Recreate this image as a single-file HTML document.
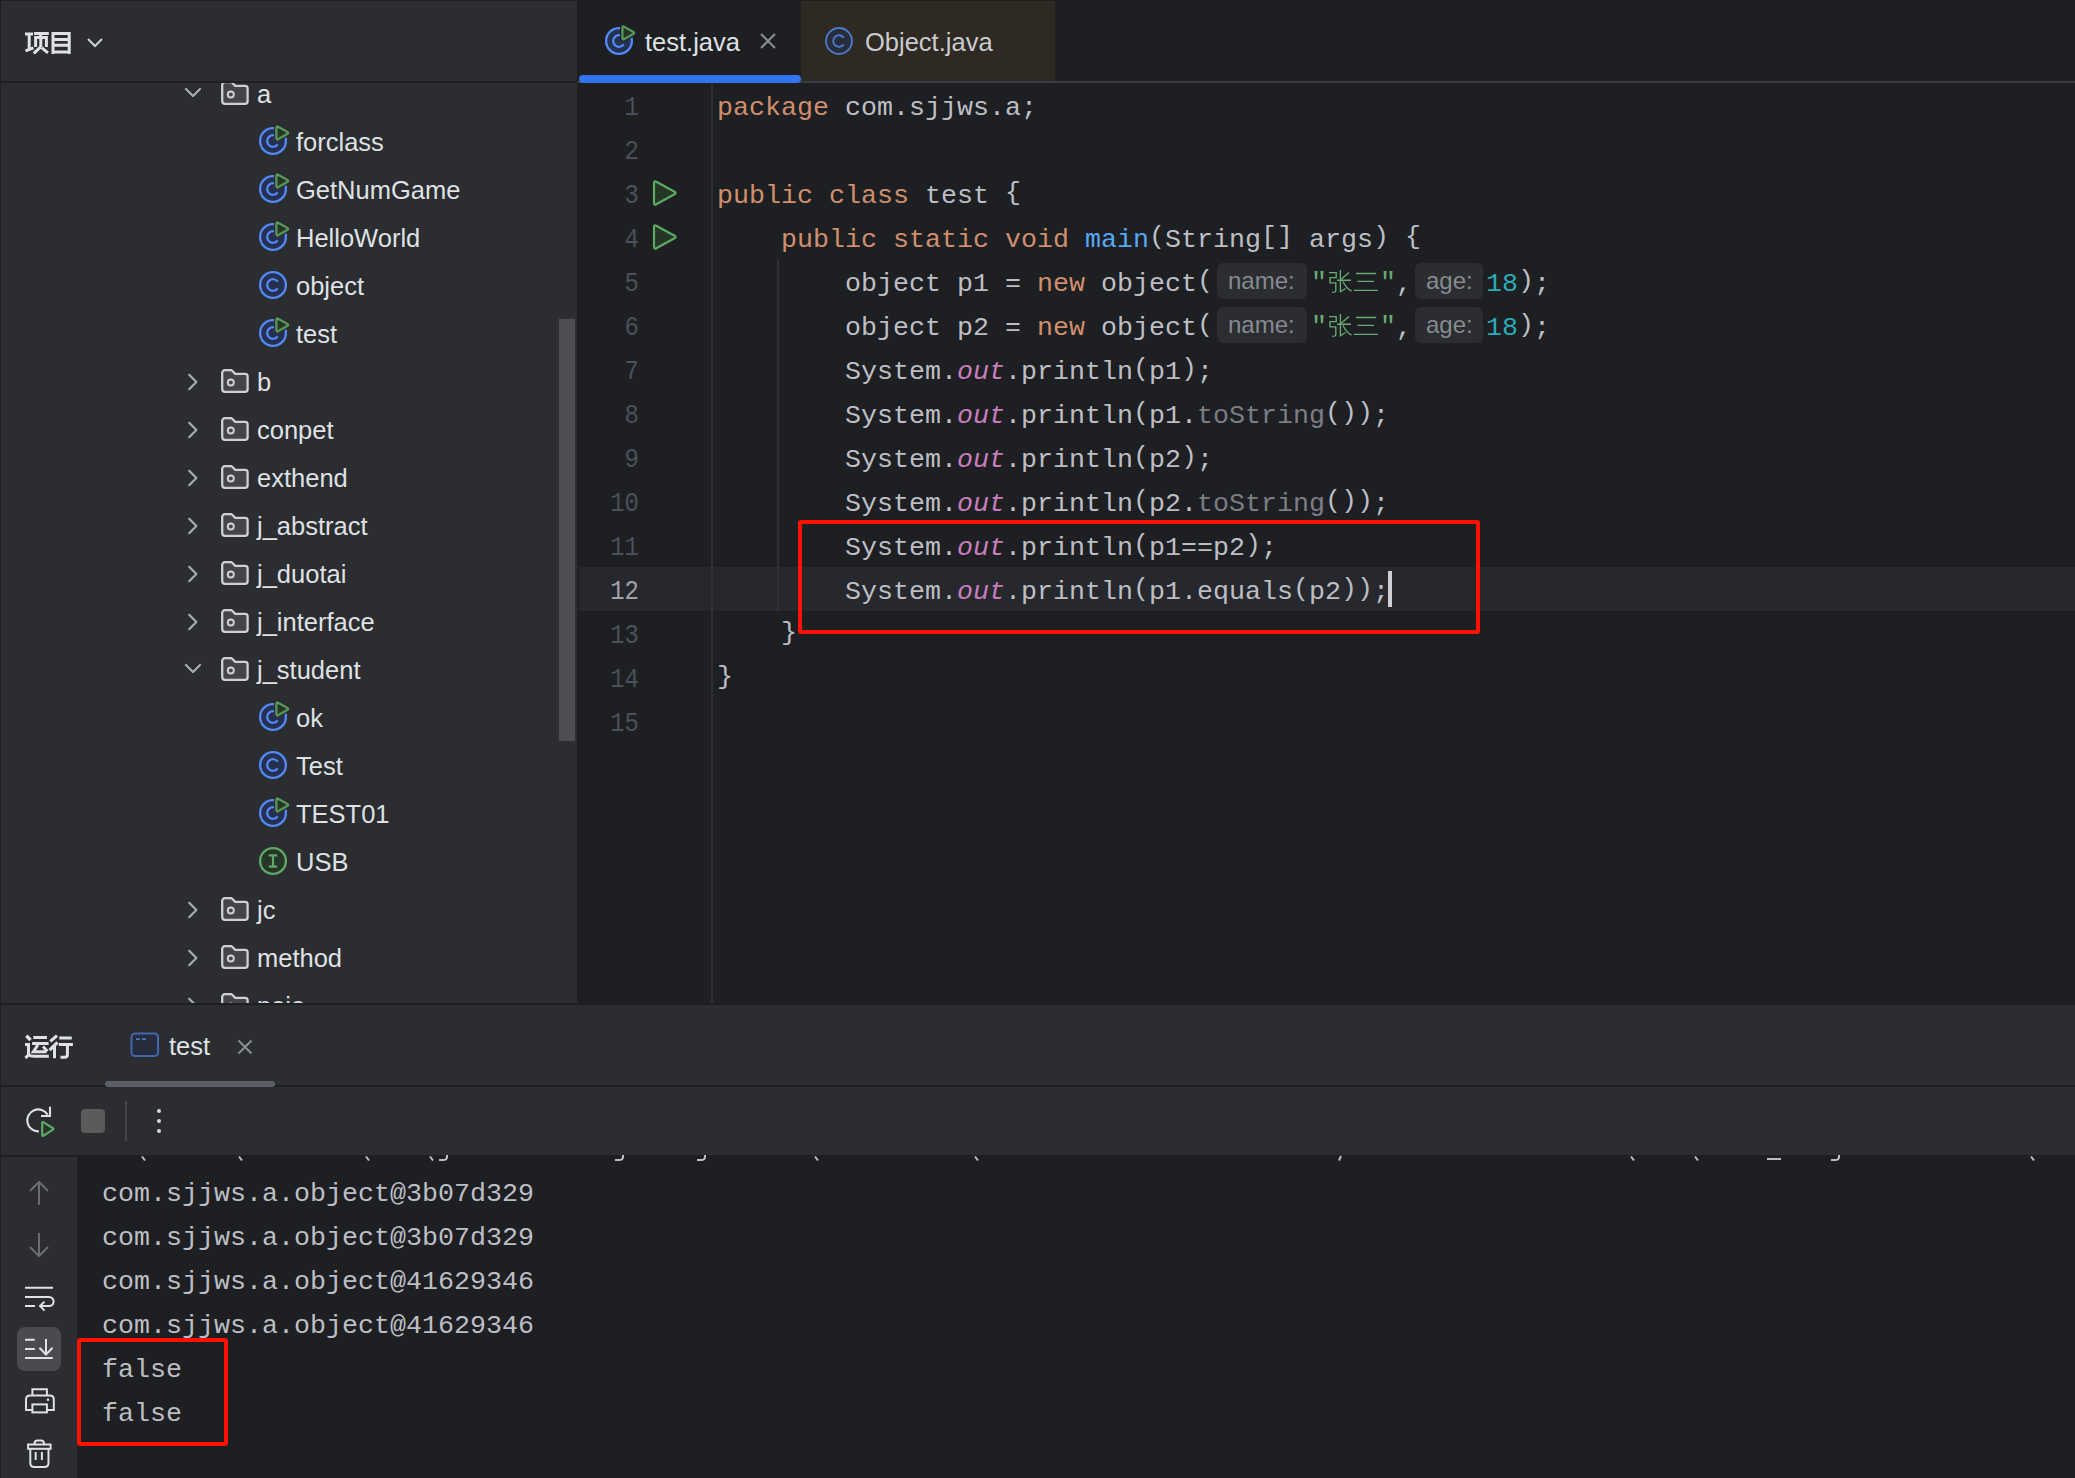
<!DOCTYPE html><html><head><meta charset="utf-8"><title>IDE</title><style>
html,body{margin:0;padding:0;width:2075px;height:1478px;overflow:hidden;background:#1E1F22;}
.t{position:absolute;white-space:pre;}
.sans{font-family:"Liberation Sans", sans-serif;}
.mono{font-family:"Liberation Mono", monospace;}
.b{position:relative;top:-2.5px;}
.q{position:relative;top:-1.3px;}
.r{position:absolute;}
.s{position:absolute;overflow:visible;}
</style></head><body>
<div class="r" style="left:1px;top:1px;width:576px;height:1002px;background:#2B2D30;"></div>
<div class="r" style="left:1px;top:81px;width:576px;height:2px;background:#1E1F22;"></div>
<svg class="s" style="left:20px;top:26px;" width="60" height="34" viewBox="0 0 60 34"><g fill="none" stroke="#DFE1E5" stroke-width="3" stroke-linecap="butt"><path d="M5 8H13M9.2 8V22.5M5.5 24.8L13.5 21.8"/><path d="M14 7.6H28.8M20.6 8V11"/><path d="M14.1 11.6H27.9M15.6 10.1V21M26.4 10.1V21M20.8 13V21"/><path d="M20.6 21L13.8 27.4M21.6 21.6L28 26.8" stroke-linecap="butt"/><path d="M33 6.1V28M49.2 6.1V28M31.5 7.6H50.7M33 13.6H49M33 19.2H49M31.5 25.9H50.7"/></g></svg>
<svg class="s" style="left:84px;top:34px;" width="22" height="16" viewBox="0 0 22 16"><path d="M4 5L11 12L18 5" fill="none" stroke="#CED0D6" stroke-width="2"/></svg>
<div style="position:absolute;left:1px;top:83px;width:556px;height:920px;overflow:hidden;">
<svg class="s" style="left:182px;top:1px" width="20" height="20" viewBox="0 0 20 20"><path d="M3 5L10 12L17 5" fill="none" stroke="#A8ADB4" stroke-width="2.2" stroke-linecap="round" stroke-linejoin="round"/></svg>
<svg class="s" style="left:220px;top:-2px" width="28" height="25" viewBox="0 0 28 25"><path d="M1.2 4a2.8 2.8 0 0 1 2.8-2.8h6.6l3.7 3.7h9.7a2.6 2.6 0 0 1 2.6 2.6v12.8a2.6 2.6 0 0 1-2.6 2.6H4a2.8 2.8 0 0 1-2.8-2.8z" fill="#43454A" stroke="#CED0D6" stroke-width="2.3" stroke-linejoin="round"/><circle cx="9.8" cy="13.6" r="3" fill="none" stroke="#CED0D6" stroke-width="2"/></svg>
<div class="t sans" style="left:256px;top:-12.84px;font-size:25.5px;line-height:48px;color:#DFE1E5;">a</div>
<svg class="s" style="left:256px;top:42px" width="32" height="32" viewBox="0 0 32 32"><circle cx="16" cy="16" r="12.9" fill="#243150" stroke="#548AF7" stroke-width="2.3"/><path d="M20.75 12.67A5.8 5.8 0 1 0 20.75 19.33" fill="none" stroke="#548AF7" stroke-width="2.2"/><path d="M19.40 3.10Q19.40 0.70 21.49 1.88L30.11 6.72Q32.20 7.90 30.11 9.08L21.49 13.92Q19.40 15.10 19.40 12.70Z" fill="#253627" stroke="#2B2D30" stroke-width="4.8" stroke-linejoin="round"/><path d="M19.40 3.10Q19.40 0.70 21.49 1.88L30.11 6.72Q32.20 7.90 30.11 9.08L21.49 13.92Q19.40 15.10 19.40 12.70Z" fill="#253627" stroke="#57965C" stroke-width="2.3" stroke-linejoin="round"/></svg>
<div class="t sans" style="left:295px;top:35.16px;font-size:25.5px;line-height:48px;color:#DFE1E5;">forclass</div>
<svg class="s" style="left:256px;top:90px" width="32" height="32" viewBox="0 0 32 32"><circle cx="16" cy="16" r="12.9" fill="#243150" stroke="#548AF7" stroke-width="2.3"/><path d="M20.75 12.67A5.8 5.8 0 1 0 20.75 19.33" fill="none" stroke="#548AF7" stroke-width="2.2"/><path d="M19.40 3.10Q19.40 0.70 21.49 1.88L30.11 6.72Q32.20 7.90 30.11 9.08L21.49 13.92Q19.40 15.10 19.40 12.70Z" fill="#253627" stroke="#2B2D30" stroke-width="4.8" stroke-linejoin="round"/><path d="M19.40 3.10Q19.40 0.70 21.49 1.88L30.11 6.72Q32.20 7.90 30.11 9.08L21.49 13.92Q19.40 15.10 19.40 12.70Z" fill="#253627" stroke="#57965C" stroke-width="2.3" stroke-linejoin="round"/></svg>
<div class="t sans" style="left:295px;top:83.16px;font-size:25.5px;line-height:48px;color:#DFE1E5;">GetNumGame</div>
<svg class="s" style="left:256px;top:138px" width="32" height="32" viewBox="0 0 32 32"><circle cx="16" cy="16" r="12.9" fill="#243150" stroke="#548AF7" stroke-width="2.3"/><path d="M20.75 12.67A5.8 5.8 0 1 0 20.75 19.33" fill="none" stroke="#548AF7" stroke-width="2.2"/><path d="M19.40 3.10Q19.40 0.70 21.49 1.88L30.11 6.72Q32.20 7.90 30.11 9.08L21.49 13.92Q19.40 15.10 19.40 12.70Z" fill="#253627" stroke="#2B2D30" stroke-width="4.8" stroke-linejoin="round"/><path d="M19.40 3.10Q19.40 0.70 21.49 1.88L30.11 6.72Q32.20 7.90 30.11 9.08L21.49 13.92Q19.40 15.10 19.40 12.70Z" fill="#253627" stroke="#57965C" stroke-width="2.3" stroke-linejoin="round"/></svg>
<div class="t sans" style="left:295px;top:131.16px;font-size:25.5px;line-height:48px;color:#DFE1E5;">HelloWorld</div>
<svg class="s" style="left:256px;top:186px" width="32" height="32" viewBox="0 0 32 32"><circle cx="16" cy="16" r="12.9" fill="#243150" stroke="#548AF7" stroke-width="2.3"/><path d="M20.75 12.67A5.8 5.8 0 1 0 20.75 19.33" fill="none" stroke="#548AF7" stroke-width="2.2"/></svg>
<div class="t sans" style="left:295px;top:179.16px;font-size:25.5px;line-height:48px;color:#DFE1E5;">object</div>
<svg class="s" style="left:256px;top:234px" width="32" height="32" viewBox="0 0 32 32"><circle cx="16" cy="16" r="12.9" fill="#243150" stroke="#548AF7" stroke-width="2.3"/><path d="M20.75 12.67A5.8 5.8 0 1 0 20.75 19.33" fill="none" stroke="#548AF7" stroke-width="2.2"/><path d="M19.40 3.10Q19.40 0.70 21.49 1.88L30.11 6.72Q32.20 7.90 30.11 9.08L21.49 13.92Q19.40 15.10 19.40 12.70Z" fill="#253627" stroke="#2B2D30" stroke-width="4.8" stroke-linejoin="round"/><path d="M19.40 3.10Q19.40 0.70 21.49 1.88L30.11 6.72Q32.20 7.90 30.11 9.08L21.49 13.92Q19.40 15.10 19.40 12.70Z" fill="#253627" stroke="#57965C" stroke-width="2.3" stroke-linejoin="round"/></svg>
<div class="t sans" style="left:295px;top:227.16px;font-size:25.5px;line-height:48px;color:#DFE1E5;">test</div>
<svg class="s" style="left:182px;top:289px" width="20" height="20" viewBox="0 0 20 20"><path d="M6.2 2.8L13.4 10L6.2 17.2" fill="none" stroke="#A8ADB4" stroke-width="2.2" stroke-linecap="round" stroke-linejoin="round"/></svg>
<svg class="s" style="left:220px;top:286px" width="28" height="25" viewBox="0 0 28 25"><path d="M1.2 4a2.8 2.8 0 0 1 2.8-2.8h6.6l3.7 3.7h9.7a2.6 2.6 0 0 1 2.6 2.6v12.8a2.6 2.6 0 0 1-2.6 2.6H4a2.8 2.8 0 0 1-2.8-2.8z" fill="#43454A" stroke="#CED0D6" stroke-width="2.3" stroke-linejoin="round"/><circle cx="9.8" cy="13.6" r="3" fill="none" stroke="#CED0D6" stroke-width="2"/></svg>
<div class="t sans" style="left:256px;top:275.16px;font-size:25.5px;line-height:48px;color:#DFE1E5;">b</div>
<svg class="s" style="left:182px;top:337px" width="20" height="20" viewBox="0 0 20 20"><path d="M6.2 2.8L13.4 10L6.2 17.2" fill="none" stroke="#A8ADB4" stroke-width="2.2" stroke-linecap="round" stroke-linejoin="round"/></svg>
<svg class="s" style="left:220px;top:334px" width="28" height="25" viewBox="0 0 28 25"><path d="M1.2 4a2.8 2.8 0 0 1 2.8-2.8h6.6l3.7 3.7h9.7a2.6 2.6 0 0 1 2.6 2.6v12.8a2.6 2.6 0 0 1-2.6 2.6H4a2.8 2.8 0 0 1-2.8-2.8z" fill="#43454A" stroke="#CED0D6" stroke-width="2.3" stroke-linejoin="round"/><circle cx="9.8" cy="13.6" r="3" fill="none" stroke="#CED0D6" stroke-width="2"/></svg>
<div class="t sans" style="left:256px;top:323.16px;font-size:25.5px;line-height:48px;color:#DFE1E5;">conpet</div>
<svg class="s" style="left:182px;top:385px" width="20" height="20" viewBox="0 0 20 20"><path d="M6.2 2.8L13.4 10L6.2 17.2" fill="none" stroke="#A8ADB4" stroke-width="2.2" stroke-linecap="round" stroke-linejoin="round"/></svg>
<svg class="s" style="left:220px;top:382px" width="28" height="25" viewBox="0 0 28 25"><path d="M1.2 4a2.8 2.8 0 0 1 2.8-2.8h6.6l3.7 3.7h9.7a2.6 2.6 0 0 1 2.6 2.6v12.8a2.6 2.6 0 0 1-2.6 2.6H4a2.8 2.8 0 0 1-2.8-2.8z" fill="#43454A" stroke="#CED0D6" stroke-width="2.3" stroke-linejoin="round"/><circle cx="9.8" cy="13.6" r="3" fill="none" stroke="#CED0D6" stroke-width="2"/></svg>
<div class="t sans" style="left:256px;top:371.16px;font-size:25.5px;line-height:48px;color:#DFE1E5;">exthend</div>
<svg class="s" style="left:182px;top:433px" width="20" height="20" viewBox="0 0 20 20"><path d="M6.2 2.8L13.4 10L6.2 17.2" fill="none" stroke="#A8ADB4" stroke-width="2.2" stroke-linecap="round" stroke-linejoin="round"/></svg>
<svg class="s" style="left:220px;top:430px" width="28" height="25" viewBox="0 0 28 25"><path d="M1.2 4a2.8 2.8 0 0 1 2.8-2.8h6.6l3.7 3.7h9.7a2.6 2.6 0 0 1 2.6 2.6v12.8a2.6 2.6 0 0 1-2.6 2.6H4a2.8 2.8 0 0 1-2.8-2.8z" fill="#43454A" stroke="#CED0D6" stroke-width="2.3" stroke-linejoin="round"/><circle cx="9.8" cy="13.6" r="3" fill="none" stroke="#CED0D6" stroke-width="2"/></svg>
<div class="t sans" style="left:256px;top:419.16px;font-size:25.5px;line-height:48px;color:#DFE1E5;">j_abstract</div>
<svg class="s" style="left:182px;top:481px" width="20" height="20" viewBox="0 0 20 20"><path d="M6.2 2.8L13.4 10L6.2 17.2" fill="none" stroke="#A8ADB4" stroke-width="2.2" stroke-linecap="round" stroke-linejoin="round"/></svg>
<svg class="s" style="left:220px;top:478px" width="28" height="25" viewBox="0 0 28 25"><path d="M1.2 4a2.8 2.8 0 0 1 2.8-2.8h6.6l3.7 3.7h9.7a2.6 2.6 0 0 1 2.6 2.6v12.8a2.6 2.6 0 0 1-2.6 2.6H4a2.8 2.8 0 0 1-2.8-2.8z" fill="#43454A" stroke="#CED0D6" stroke-width="2.3" stroke-linejoin="round"/><circle cx="9.8" cy="13.6" r="3" fill="none" stroke="#CED0D6" stroke-width="2"/></svg>
<div class="t sans" style="left:256px;top:467.16px;font-size:25.5px;line-height:48px;color:#DFE1E5;">j_duotai</div>
<svg class="s" style="left:182px;top:529px" width="20" height="20" viewBox="0 0 20 20"><path d="M6.2 2.8L13.4 10L6.2 17.2" fill="none" stroke="#A8ADB4" stroke-width="2.2" stroke-linecap="round" stroke-linejoin="round"/></svg>
<svg class="s" style="left:220px;top:526px" width="28" height="25" viewBox="0 0 28 25"><path d="M1.2 4a2.8 2.8 0 0 1 2.8-2.8h6.6l3.7 3.7h9.7a2.6 2.6 0 0 1 2.6 2.6v12.8a2.6 2.6 0 0 1-2.6 2.6H4a2.8 2.8 0 0 1-2.8-2.8z" fill="#43454A" stroke="#CED0D6" stroke-width="2.3" stroke-linejoin="round"/><circle cx="9.8" cy="13.6" r="3" fill="none" stroke="#CED0D6" stroke-width="2"/></svg>
<div class="t sans" style="left:256px;top:515.16px;font-size:25.5px;line-height:48px;color:#DFE1E5;">j_interface</div>
<svg class="s" style="left:182px;top:577px" width="20" height="20" viewBox="0 0 20 20"><path d="M3 5L10 12L17 5" fill="none" stroke="#A8ADB4" stroke-width="2.2" stroke-linecap="round" stroke-linejoin="round"/></svg>
<svg class="s" style="left:220px;top:574px" width="28" height="25" viewBox="0 0 28 25"><path d="M1.2 4a2.8 2.8 0 0 1 2.8-2.8h6.6l3.7 3.7h9.7a2.6 2.6 0 0 1 2.6 2.6v12.8a2.6 2.6 0 0 1-2.6 2.6H4a2.8 2.8 0 0 1-2.8-2.8z" fill="#43454A" stroke="#CED0D6" stroke-width="2.3" stroke-linejoin="round"/><circle cx="9.8" cy="13.6" r="3" fill="none" stroke="#CED0D6" stroke-width="2"/></svg>
<div class="t sans" style="left:256px;top:563.16px;font-size:25.5px;line-height:48px;color:#DFE1E5;">j_student</div>
<svg class="s" style="left:256px;top:618px" width="32" height="32" viewBox="0 0 32 32"><circle cx="16" cy="16" r="12.9" fill="#243150" stroke="#548AF7" stroke-width="2.3"/><path d="M20.75 12.67A5.8 5.8 0 1 0 20.75 19.33" fill="none" stroke="#548AF7" stroke-width="2.2"/><path d="M19.40 3.10Q19.40 0.70 21.49 1.88L30.11 6.72Q32.20 7.90 30.11 9.08L21.49 13.92Q19.40 15.10 19.40 12.70Z" fill="#253627" stroke="#2B2D30" stroke-width="4.8" stroke-linejoin="round"/><path d="M19.40 3.10Q19.40 0.70 21.49 1.88L30.11 6.72Q32.20 7.90 30.11 9.08L21.49 13.92Q19.40 15.10 19.40 12.70Z" fill="#253627" stroke="#57965C" stroke-width="2.3" stroke-linejoin="round"/></svg>
<div class="t sans" style="left:295px;top:611.16px;font-size:25.5px;line-height:48px;color:#DFE1E5;">ok</div>
<svg class="s" style="left:256px;top:666px" width="32" height="32" viewBox="0 0 32 32"><circle cx="16" cy="16" r="12.9" fill="#243150" stroke="#548AF7" stroke-width="2.3"/><path d="M20.75 12.67A5.8 5.8 0 1 0 20.75 19.33" fill="none" stroke="#548AF7" stroke-width="2.2"/></svg>
<div class="t sans" style="left:295px;top:659.16px;font-size:25.5px;line-height:48px;color:#DFE1E5;">Test</div>
<svg class="s" style="left:256px;top:714px" width="32" height="32" viewBox="0 0 32 32"><circle cx="16" cy="16" r="12.9" fill="#243150" stroke="#548AF7" stroke-width="2.3"/><path d="M20.75 12.67A5.8 5.8 0 1 0 20.75 19.33" fill="none" stroke="#548AF7" stroke-width="2.2"/><path d="M19.40 3.10Q19.40 0.70 21.49 1.88L30.11 6.72Q32.20 7.90 30.11 9.08L21.49 13.92Q19.40 15.10 19.40 12.70Z" fill="#253627" stroke="#2B2D30" stroke-width="4.8" stroke-linejoin="round"/><path d="M19.40 3.10Q19.40 0.70 21.49 1.88L30.11 6.72Q32.20 7.90 30.11 9.08L21.49 13.92Q19.40 15.10 19.40 12.70Z" fill="#253627" stroke="#57965C" stroke-width="2.3" stroke-linejoin="round"/></svg>
<div class="t sans" style="left:295px;top:707.16px;font-size:25.5px;line-height:48px;color:#DFE1E5;">TEST01</div>
<svg class="s" style="left:256px;top:762px" width="32" height="32" viewBox="0 0 32 32"><circle cx="16" cy="16" r="12.9" fill="#253627" stroke="#5FA866" stroke-width="2.3"/><path d="M11.8 10.3H20.2M16 10.3V21.7M11.8 21.7H20.2" fill="none" stroke="#5FA866" stroke-width="2.2"/></svg>
<div class="t sans" style="left:295px;top:755.16px;font-size:25.5px;line-height:48px;color:#DFE1E5;">USB</div>
<svg class="s" style="left:182px;top:817px" width="20" height="20" viewBox="0 0 20 20"><path d="M6.2 2.8L13.4 10L6.2 17.2" fill="none" stroke="#A8ADB4" stroke-width="2.2" stroke-linecap="round" stroke-linejoin="round"/></svg>
<svg class="s" style="left:220px;top:814px" width="28" height="25" viewBox="0 0 28 25"><path d="M1.2 4a2.8 2.8 0 0 1 2.8-2.8h6.6l3.7 3.7h9.7a2.6 2.6 0 0 1 2.6 2.6v12.8a2.6 2.6 0 0 1-2.6 2.6H4a2.8 2.8 0 0 1-2.8-2.8z" fill="#43454A" stroke="#CED0D6" stroke-width="2.3" stroke-linejoin="round"/><circle cx="9.8" cy="13.6" r="3" fill="none" stroke="#CED0D6" stroke-width="2"/></svg>
<div class="t sans" style="left:256px;top:803.16px;font-size:25.5px;line-height:48px;color:#DFE1E5;">jc</div>
<svg class="s" style="left:182px;top:865px" width="20" height="20" viewBox="0 0 20 20"><path d="M6.2 2.8L13.4 10L6.2 17.2" fill="none" stroke="#A8ADB4" stroke-width="2.2" stroke-linecap="round" stroke-linejoin="round"/></svg>
<svg class="s" style="left:220px;top:862px" width="28" height="25" viewBox="0 0 28 25"><path d="M1.2 4a2.8 2.8 0 0 1 2.8-2.8h6.6l3.7 3.7h9.7a2.6 2.6 0 0 1 2.6 2.6v12.8a2.6 2.6 0 0 1-2.6 2.6H4a2.8 2.8 0 0 1-2.8-2.8z" fill="#43454A" stroke="#CED0D6" stroke-width="2.3" stroke-linejoin="round"/><circle cx="9.8" cy="13.6" r="3" fill="none" stroke="#CED0D6" stroke-width="2"/></svg>
<div class="t sans" style="left:256px;top:851.16px;font-size:25.5px;line-height:48px;color:#DFE1E5;">method</div>
<svg class="s" style="left:182px;top:913px" width="20" height="20" viewBox="0 0 20 20"><path d="M6.2 2.8L13.4 10L6.2 17.2" fill="none" stroke="#A8ADB4" stroke-width="2.2" stroke-linecap="round" stroke-linejoin="round"/></svg>
<svg class="s" style="left:220px;top:910px" width="28" height="25" viewBox="0 0 28 25"><path d="M1.2 4a2.8 2.8 0 0 1 2.8-2.8h6.6l3.7 3.7h9.7a2.6 2.6 0 0 1 2.6 2.6v12.8a2.6 2.6 0 0 1-2.6 2.6H4a2.8 2.8 0 0 1-2.8-2.8z" fill="#43454A" stroke="#CED0D6" stroke-width="2.3" stroke-linejoin="round"/><circle cx="9.8" cy="13.6" r="3" fill="none" stroke="#CED0D6" stroke-width="2"/></svg>
<div class="t sans" style="left:256px;top:899.16px;font-size:25.5px;line-height:48px;color:#DFE1E5;">pojo</div>
</div>
<div class="r" style="left:557px;top:317px;width:20px;height:426px;background:#2D2F32;"></div>
<div class="r" style="left:559px;top:319px;width:16px;height:422px;background:#4D4E52;"></div>
<div class="r" style="left:577px;top:1px;width:1498px;height:80px;background:#1E1F22;"></div>
<div class="r" style="left:801px;top:1px;width:254px;height:80px;background:#2E2922;"></div>
<div class="r" style="left:577px;top:81px;width:1498px;height:2px;background:#393B40;"></div>
<div class="r" style="left:579px;top:75px;width:222px;height:8px;background:#3574F0;border-radius:4px;"></div>
<svg class="s" style="left:603px;top:25px;" width="32" height="32" viewBox="0 0 32 32"><circle cx="16" cy="16" r="12.9" fill="#243150" stroke="#548AF7" stroke-width="2.3"/><path d="M20.75 12.67A5.8 5.8 0 1 0 20.75 19.33" fill="none" stroke="#548AF7" stroke-width="2.2"/><path d="M19.40 3.10Q19.40 0.70 21.49 1.88L30.11 6.72Q32.20 7.90 30.11 9.08L21.49 13.92Q19.40 15.10 19.40 12.70Z" fill="#253627" stroke="#1E1F22" stroke-width="4.8" stroke-linejoin="round"/><path d="M19.40 3.10Q19.40 0.70 21.49 1.88L30.11 6.72Q32.20 7.90 30.11 9.08L21.49 13.92Q19.40 15.10 19.40 12.70Z" fill="#253627" stroke="#57965C" stroke-width="2.3" stroke-linejoin="round"/></svg>
<svg class="s" style="left:823px;top:25px;" width="32" height="32" viewBox="0 0 32 32"><circle cx="16" cy="16" r="13" fill="#262D3D" stroke="#4E78C8" stroke-width="1.9"/><path d="M20.75 12.67A5.8 5.8 0 1 0 20.75 19.33" fill="none" stroke="#4E78C8" stroke-width="1.9"/></svg>
<div class="t sans" style="left:645px;top:23.16px;font-size:25.5px;line-height:38px;color:#DFE1E5;font-weight:normal;font-style:normal;">test.java</div>
<div class="t sans" style="left:865px;top:23.16px;font-size:25.5px;line-height:38px;color:#C9CBCF;font-weight:normal;font-style:normal;">Object.java</div>
<svg class="s" style="left:758px;top:31px;" width="20" height="20" viewBox="0 0 20 20"><path d="M3 3L17 17M17 3L3 17" stroke="#8B8E94" stroke-width="2"/></svg>
<div class="r" style="left:579px;top:567px;width:1496px;height:44px;background:#26282E;"></div>
<div class="r" style="left:711px;top:83px;width:2px;height:920px;background:#2E3034;"></div>
<div class="r" style="left:777px;top:259px;width:2px;height:352px;background:#2E3034;"></div>
<div class="t mono" style="left:539px;width:100px;text-align:right;top:86.10px;font-size:28.2px;line-height:44px;color:#4B5059;transform:scaleX(0.85);transform-origin:100% 50%;">1</div>
<div class="t mono" style="left:539px;width:100px;text-align:right;top:130.10px;font-size:28.2px;line-height:44px;color:#4B5059;transform:scaleX(0.85);transform-origin:100% 50%;">2</div>
<div class="t mono" style="left:539px;width:100px;text-align:right;top:174.10px;font-size:28.2px;line-height:44px;color:#4B5059;transform:scaleX(0.85);transform-origin:100% 50%;">3</div>
<div class="t mono" style="left:539px;width:100px;text-align:right;top:218.10px;font-size:28.2px;line-height:44px;color:#4B5059;transform:scaleX(0.85);transform-origin:100% 50%;">4</div>
<div class="t mono" style="left:539px;width:100px;text-align:right;top:262.10px;font-size:28.2px;line-height:44px;color:#4B5059;transform:scaleX(0.85);transform-origin:100% 50%;">5</div>
<div class="t mono" style="left:539px;width:100px;text-align:right;top:306.10px;font-size:28.2px;line-height:44px;color:#4B5059;transform:scaleX(0.85);transform-origin:100% 50%;">6</div>
<div class="t mono" style="left:539px;width:100px;text-align:right;top:350.10px;font-size:28.2px;line-height:44px;color:#4B5059;transform:scaleX(0.85);transform-origin:100% 50%;">7</div>
<div class="t mono" style="left:539px;width:100px;text-align:right;top:394.10px;font-size:28.2px;line-height:44px;color:#4B5059;transform:scaleX(0.85);transform-origin:100% 50%;">8</div>
<div class="t mono" style="left:539px;width:100px;text-align:right;top:438.10px;font-size:28.2px;line-height:44px;color:#4B5059;transform:scaleX(0.85);transform-origin:100% 50%;">9</div>
<div class="t mono" style="left:539px;width:100px;text-align:right;top:482.10px;font-size:28.2px;line-height:44px;color:#4B5059;transform:scaleX(0.85);transform-origin:100% 50%;">10</div>
<div class="t mono" style="left:539px;width:100px;text-align:right;top:526.10px;font-size:28.2px;line-height:44px;color:#4B5059;transform:scaleX(0.85);transform-origin:100% 50%;">11</div>
<div class="t mono" style="left:539px;width:100px;text-align:right;top:570.10px;font-size:28.2px;line-height:44px;color:#A1A3AB;transform:scaleX(0.85);transform-origin:100% 50%;">12</div>
<div class="t mono" style="left:539px;width:100px;text-align:right;top:614.10px;font-size:28.2px;line-height:44px;color:#4B5059;transform:scaleX(0.85);transform-origin:100% 50%;">13</div>
<div class="t mono" style="left:539px;width:100px;text-align:right;top:658.10px;font-size:28.2px;line-height:44px;color:#4B5059;transform:scaleX(0.85);transform-origin:100% 50%;">14</div>
<div class="t mono" style="left:539px;width:100px;text-align:right;top:702.10px;font-size:28.2px;line-height:44px;color:#4B5059;transform:scaleX(0.85);transform-origin:100% 50%;">15</div>
<div class="t mono" style="left:717px;top:85.90px;font-size:26.67px;line-height:44px;color:#BCBEC4;font-weight:normal;font-style:normal;"><span style="color:#CF8E6D;">package </span><span style="color:#BCBEC4;">com.sjjws.a;</span></div>
<div class="t mono" style="left:717px;top:173.90px;font-size:26.67px;line-height:44px;color:#BCBEC4;font-weight:normal;font-style:normal;"><span style="color:#CF8E6D;">public class </span><span style="color:#BCBEC4;">test <span class="b">{</span></span></div>
<div class="t mono" style="left:781px;top:217.90px;font-size:26.67px;line-height:44px;color:#BCBEC4;font-weight:normal;font-style:normal;"><span style="color:#CF8E6D;">public static void </span><span style="color:#56A8F5;">main</span><span style="color:#BCBEC4;"><span class="b">(</span>String<span class="b">[</span><span class="b">]</span> args<span class="b">)</span> <span class="b">{</span></span></div>
<div class="t mono" style="left:845px;top:349.90px;font-size:26.67px;line-height:44px;color:#BCBEC4;font-weight:normal;font-style:normal;"><span style="color:#BCBEC4;">System.</span><span style="color:#C77DBB;font-style:italic;">out</span><span style="color:#BCBEC4;">.println<span class="b">(</span>p1<span class="b">)</span>;</span></div>
<div class="t mono" style="left:845px;top:437.90px;font-size:26.67px;line-height:44px;color:#BCBEC4;font-weight:normal;font-style:normal;"><span style="color:#BCBEC4;">System.</span><span style="color:#C77DBB;font-style:italic;">out</span><span style="color:#BCBEC4;">.println<span class="b">(</span>p2<span class="b">)</span>;</span></div>
<div class="t mono" style="left:845px;top:393.90px;font-size:26.67px;line-height:44px;color:#BCBEC4;font-weight:normal;font-style:normal;"><span style="color:#BCBEC4;">System.</span><span style="color:#C77DBB;font-style:italic;">out</span><span style="color:#BCBEC4;">.println<span class="b">(</span>p1.</span><span style="color:#7A7E85;">toString</span><span style="color:#BCBEC4;"><span class="b">(</span><span class="b">)</span><span class="b">)</span>;</span></div>
<div class="t mono" style="left:845px;top:481.90px;font-size:26.67px;line-height:44px;color:#BCBEC4;font-weight:normal;font-style:normal;"><span style="color:#BCBEC4;">System.</span><span style="color:#C77DBB;font-style:italic;">out</span><span style="color:#BCBEC4;">.println<span class="b">(</span>p2.</span><span style="color:#7A7E85;">toString</span><span style="color:#BCBEC4;"><span class="b">(</span><span class="b">)</span><span class="b">)</span>;</span></div>
<div class="t mono" style="left:845px;top:525.90px;font-size:26.67px;line-height:44px;color:#BCBEC4;font-weight:normal;font-style:normal;"><span style="color:#BCBEC4;">System.</span><span style="color:#C77DBB;font-style:italic;">out</span><span style="color:#BCBEC4;">.println<span class="b">(</span>p1==p2<span class="b">)</span>;</span></div>
<div class="t mono" style="left:845px;top:569.90px;font-size:26.67px;line-height:44px;color:#BCBEC4;font-weight:normal;font-style:normal;"><span style="color:#BCBEC4;">System.</span><span style="color:#C77DBB;font-style:italic;">out</span><span style="color:#BCBEC4;">.println<span class="b">(</span>p1.equals<span class="b">(</span>p2<span class="b">)</span><span class="b">)</span>;</span></div>
<div class="t mono" style="left:781px;top:613.90px;font-size:26.67px;line-height:44px;color:#BCBEC4;font-weight:normal;font-style:normal;"><span style="color:#BCBEC4;"><span class="b">}</span></span></div>
<div class="t mono" style="left:717px;top:657.90px;font-size:26.67px;line-height:44px;color:#BCBEC4;font-weight:normal;font-style:normal;"><span style="color:#BCBEC4;"><span class="b">}</span></span></div>
<div class="t mono" style="left:845px;top:261.90px;font-size:26.67px;line-height:44px;color:#BCBEC4;font-weight:normal;font-style:normal;"><span style="color:#BCBEC4;">object p1 = </span><span style="color:#CF8E6D;">new </span><span style="color:#BCBEC4;">object<span class="b">(</span></span></div>
<div class="r" style="left:1217px;top:263px;width:90px;height:36px;background:#2B2D30;border-radius:6px;"></div>
<div class="t sans" style="left:1228px;top:262.68px;font-size:24px;line-height:36px;color:#868A91;font-weight:normal;font-style:normal;">name:</div>
<div class="t mono" style="left:1311px;top:261.90px;font-size:26.67px;line-height:44px;color:#6AAB73;font-weight:normal;font-style:normal;"><span class="q">&quot;</span></div>
<svg class="s" style="left:1327px;top:269px;" width="53" height="26" viewBox="0 0 53 26"><g fill="none" stroke="#6AAB73" stroke-width="1.35" stroke-linecap="butt" stroke-linejoin="miter"><path d="M2 3.6H9.2V8.6H3V13.9H8.8V21.5Q8.8 23.6 5.2 23.4"/><path d="M13.4 1V22.8L18.5 19.5M22 3.5L14.5 10M10 11.2H24M16 12.5Q19 19 24.5 22.2"/><path d="M29 4.5H49M30.5 12.4H47M27 21.4H50.8"/></g></svg>
<div class="t mono" style="left:1380px;top:261.90px;font-size:26.67px;line-height:44px;color:#6AAB73;font-weight:normal;font-style:normal;"><span class="q">&quot;</span></div>
<div class="t mono" style="left:1396px;top:261.90px;font-size:26.67px;line-height:44px;color:#BCBEC4;font-weight:normal;font-style:normal;">,</div>
<div class="r" style="left:1415px;top:263px;width:68px;height:36px;background:#2B2D30;border-radius:6px;"></div>
<div class="t sans" style="left:1426px;top:262.68px;font-size:24px;line-height:36px;color:#868A91;font-weight:normal;font-style:normal;">age:</div>
<div class="t mono" style="left:1486px;top:261.90px;font-size:26.67px;line-height:44px;color:#2AACB8;font-weight:normal;font-style:normal;">18</div>
<div class="t mono" style="left:1518px;top:261.90px;font-size:26.67px;line-height:44px;color:#BCBEC4;font-weight:normal;font-style:normal;"><span class="b">)</span>;</div>
<div class="t mono" style="left:845px;top:305.90px;font-size:26.67px;line-height:44px;color:#BCBEC4;font-weight:normal;font-style:normal;"><span style="color:#BCBEC4;">object p2 = </span><span style="color:#CF8E6D;">new </span><span style="color:#BCBEC4;">object<span class="b">(</span></span></div>
<div class="r" style="left:1217px;top:307px;width:90px;height:36px;background:#2B2D30;border-radius:6px;"></div>
<div class="t sans" style="left:1228px;top:306.68px;font-size:24px;line-height:36px;color:#868A91;font-weight:normal;font-style:normal;">name:</div>
<div class="t mono" style="left:1311px;top:305.90px;font-size:26.67px;line-height:44px;color:#6AAB73;font-weight:normal;font-style:normal;"><span class="q">&quot;</span></div>
<svg class="s" style="left:1327px;top:313px;" width="53" height="26" viewBox="0 0 53 26"><g fill="none" stroke="#6AAB73" stroke-width="1.35" stroke-linecap="butt" stroke-linejoin="miter"><path d="M2 3.6H9.2V8.6H3V13.9H8.8V21.5Q8.8 23.6 5.2 23.4"/><path d="M13.4 1V22.8L18.5 19.5M22 3.5L14.5 10M10 11.2H24M16 12.5Q19 19 24.5 22.2"/><path d="M29 4.5H49M30.5 12.4H47M27 21.4H50.8"/></g></svg>
<div class="t mono" style="left:1380px;top:305.90px;font-size:26.67px;line-height:44px;color:#6AAB73;font-weight:normal;font-style:normal;"><span class="q">&quot;</span></div>
<div class="t mono" style="left:1396px;top:305.90px;font-size:26.67px;line-height:44px;color:#BCBEC4;font-weight:normal;font-style:normal;">,</div>
<div class="r" style="left:1415px;top:307px;width:68px;height:36px;background:#2B2D30;border-radius:6px;"></div>
<div class="t sans" style="left:1426px;top:306.68px;font-size:24px;line-height:36px;color:#868A91;font-weight:normal;font-style:normal;">age:</div>
<div class="t mono" style="left:1486px;top:305.90px;font-size:26.67px;line-height:44px;color:#2AACB8;font-weight:normal;font-style:normal;">18</div>
<div class="t mono" style="left:1518px;top:305.90px;font-size:26.67px;line-height:44px;color:#BCBEC4;font-weight:normal;font-style:normal;"><span class="b">)</span>;</div>
<div class="r" style="left:1388px;top:571px;width:4px;height:36px;background:#CED0D6;"></div>
<div style="position:absolute;left:798px;top:520px;width:682px;height:114px;border:4px solid #FF1100;border-radius:3px;box-sizing:border-box;"></div>
<svg class="s" style="left:650px;top:178px;" width="30" height="30" viewBox="0 0 30 30"><path d="M4.00 5.20Q4.00 2.60 6.28 3.84L24.52 13.76Q26.80 15.00 24.52 16.24L6.28 26.16Q4.00 27.40 4.00 24.80Z" fill="#253627" stroke="#5DAA63" stroke-width="2.2" stroke-linejoin="round"/></svg>
<svg class="s" style="left:650px;top:222px;" width="30" height="30" viewBox="0 0 30 30"><path d="M4.00 5.20Q4.00 2.60 6.28 3.84L24.52 13.76Q26.80 15.00 24.52 16.24L6.28 26.16Q4.00 27.40 4.00 24.80Z" fill="#253627" stroke="#5DAA63" stroke-width="2.2" stroke-linejoin="round"/></svg>
<div class="r" style="left:0px;top:1003px;width:2075px;height:2px;background:#1E1F22;"></div>
<div class="r" style="left:1px;top:1005px;width:2074px;height:473px;background:#2B2D30;"></div>
<svg class="s" style="left:20px;top:1030px;" width="60" height="34" viewBox="0 0 60 34"><g fill="none" stroke="#DFE1E5" stroke-width="3" stroke-linecap="butt" stroke-linejoin="miter"><path d="M6.3 5.8L10.6 10" stroke-width="3.4"/><path d="M5 14.4H8.5V23.8Q8.5 25.5 5.4 28"/><path d="M8.2 24.8Q10.5 26.2 14 26.2H28.8"/><path d="M13.3 7.5H26.9M12.1 13.6H28.6M17.8 15L13.4 21.7H26.6M23 16.4L27.4 21.2"/><path d="M30.3 11.4L37 5.6M29.6 20.2L37.5 12.4" stroke-width="3.2"/><path d="M34.5 15.5V28.2"/><path d="M39.3 8.1H51.8M38.8 14.5H52.9M47.4 14.5V25Q47.4 27.3 44.5 27.3H40.5"/></g></svg>
<svg class="s" style="left:130px;top:1032px;" width="30" height="26" viewBox="0 0 30 26"><rect x="1.5" y="1.5" width="26.5" height="22.5" rx="3.5" fill="#262C3B" stroke="#4366AE" stroke-width="2"/><path d="M6 7.2H10M12 7.2H16" stroke="#4D73BF" stroke-width="1.8"/></svg>
<div class="t sans" style="left:169px;top:1027.16px;font-size:25.5px;line-height:38px;color:#DFE1E5;font-weight:normal;font-style:normal;">test</div>
<svg class="s" style="left:235px;top:1037px;" width="20" height="20" viewBox="0 0 20 20"><path d="M3.5 3.5L16.5 16.5M16.5 3.5L3.5 16.5" stroke="#8B8E94" stroke-width="2"/></svg>
<div class="r" style="left:1px;top:1085px;width:2074px;height:2px;background:#1E1F22;"></div>
<div class="r" style="left:105px;top:1081px;width:170px;height:6px;background:#5C5F66;border-radius:3px;"></div>
<svg class="s" style="left:20px;top:1100px;" width="40" height="40" viewBox="0 0 40 40"><path d="M27.6 14.6A11 11 0 1 0 18.8 31.4" fill="none" stroke="#DFE1E5" stroke-width="2.1"/><path d="M30 6.8V16H21" fill="none" stroke="#DFE1E5" stroke-width="2.1"/><path d="M22.2 22.6Q22.2 21.5 23.2 22.1L33 28.2Q34 28.9 33 29.6L23.2 35.7Q22.2 36.3 22.2 35.2Z" fill="#253627" stroke="#5FA866" stroke-width="2.2" stroke-linejoin="round"/></svg>
<div class="r" style="left:81px;top:1109px;width:24px;height:24px;background:#5B5B5B;border-radius:4px;"></div>
<div class="r" style="left:125px;top:1101px;width:2px;height:40px;background:#43454A;"></div>
<div class="r" style="left:156.6px;top:1108.6px;width:4.8px;height:4.8px;border-radius:2.4px;background:#D5D7DB;"></div>
<div class="r" style="left:156.6px;top:1118.6px;width:4.8px;height:4.8px;border-radius:2.4px;background:#D5D7DB;"></div>
<div class="r" style="left:156.6px;top:1128.6px;width:4.8px;height:4.8px;border-radius:2.4px;background:#D5D7DB;"></div>
<div class="r" style="left:1px;top:1155px;width:2074px;height:2px;background:#1E1F22;"></div>
<div class="r" style="left:77px;top:1155px;width:1998px;height:323px;background:#1E1F22;"></div>
<svg class="s" style="left:26px;top:1178px;" width="26" height="30" viewBox="0 0 26 30"><path d="M13 27V4M4 13L13 4L22 13" fill="none" stroke="#6B6D70" stroke-width="2"/></svg>
<svg class="s" style="left:26px;top:1230px;" width="26" height="30" viewBox="0 0 26 30"><path d="M13 3V26M4 17L13 26L22 17" fill="none" stroke="#6B6D70" stroke-width="2"/></svg>
<svg class="s" style="left:20px;top:1280px;" width="40" height="34" viewBox="0 0 40 34"><path d="M5 7.8H33M5 16.9H29A4.6 4.6 0 0 1 29 26.1H20.5M5 26H15" fill="none" stroke="#DFE1E5" stroke-width="2"/><path d="M24.5 21.6L20 26.1L24.5 30.6" fill="none" stroke="#DFE1E5" stroke-width="2"/></svg>
<div class="r" style="left:17px;top:1327px;width:44px;height:44px;background:#4A4B50;border-radius:8px;"></div>
<svg class="s" style="left:20px;top:1320px;" width="40" height="50" viewBox="0 0 40 50"><path d="M5 19.8H14.8M5 28.9H14.8M5 38H32.8M26 19V34.8M19.4 27.8L26 34.5L32.6 27.8" fill="none" stroke="#DFE1E5" stroke-width="2"/></svg>
<svg class="s" style="left:20px;top:1380px;" width="40" height="40" viewBox="0 0 40 40"><path d="M12.4 15.4V9.3H26.9V15.4" fill="none" stroke="#DFE1E5" stroke-width="2"/><path d="M12.4 30H6V19.4Q6 15.4 10 15.4H29.8Q33.8 15.4 33.8 19.4V30H26.9" fill="none" stroke="#DFE1E5" stroke-width="2"/><rect x="12.4" y="24.4" width="14.5" height="8" fill="none" stroke="#DFE1E5" stroke-width="2"/><circle cx="28" cy="19.7" r="1.3" fill="#DFE1E5"/></svg>
<svg class="s" style="left:20px;top:1430px;" width="40" height="44" viewBox="0 0 40 44"><rect x="8.1" y="14.5" width="22.5" height="4.3" fill="none" stroke="#DFE1E5" stroke-width="2"/><path d="M14.5 14.5V13.5Q14.5 10.5 17.5 10.5H21Q24 10.5 24 13.5V14.5" fill="none" stroke="#DFE1E5" stroke-width="2"/><path d="M10.3 18.8V33Q10.3 37 14.3 37H24.5Q28.5 37 28.5 33V18.8M15.7 22V30M21.9 22V30" fill="none" stroke="#DFE1E5" stroke-width="2"/></svg>
<div class="t mono" style="left:102px;top:1171.90px;font-size:26.67px;line-height:44px;color:#BCBEC4;font-weight:normal;font-style:normal;">com.sjjws.a.object@3b07d329</div>
<div class="t mono" style="left:102px;top:1215.90px;font-size:26.67px;line-height:44px;color:#BCBEC4;font-weight:normal;font-style:normal;">com.sjjws.a.object@3b07d329</div>
<div class="t mono" style="left:102px;top:1259.90px;font-size:26.67px;line-height:44px;color:#BCBEC4;font-weight:normal;font-style:normal;">com.sjjws.a.object@41629346</div>
<div class="t mono" style="left:102px;top:1303.90px;font-size:26.67px;line-height:44px;color:#BCBEC4;font-weight:normal;font-style:normal;">com.sjjws.a.object@41629346</div>
<div class="t mono" style="left:102px;top:1347.90px;font-size:26.67px;line-height:44px;color:#BCBEC4;font-weight:normal;font-style:normal;">false</div>
<div class="t mono" style="left:102px;top:1391.90px;font-size:26.67px;line-height:44px;color:#BCBEC4;font-weight:normal;font-style:normal;">false</div>
<svg class="s" style="left:0;top:0" width="2075" height="1478" viewBox="0 0 2075 1478"><g fill="none" stroke="#BCBEC4" stroke-width="2"><path d="M142 1156.5L145 1160.5"/><path d="M239 1156.5L242 1160.5"/><path d="M366 1156.5L369 1160.5"/><path d="M430 1156.5L433 1160.5"/><path d="M815 1156.5L818 1160.5"/><path d="M975 1156.5L978 1160.5"/><path d="M1631 1156.5L1634 1160.5"/><path d="M1695 1156.5L1698 1160.5"/><path d="M2031 1156.5L2034 1160.5"/><path d="M447 1155V1157Q447 1160 443 1160H439"/><path d="M623 1155V1157Q623 1160 619 1160H615"/><path d="M705 1155V1157Q705 1160 701 1160H697"/><path d="M1839 1155V1157Q1839 1160 1835 1160H1831"/><path d="M1341 1156L1339 1160.5"/><path d="M1767 1159H1781"/></g></svg>
<div style="position:absolute;left:77px;top:1338px;width:151px;height:108px;border:4px solid #FF1100;border-radius:3px;box-sizing:border-box;"></div>
</body></html>
